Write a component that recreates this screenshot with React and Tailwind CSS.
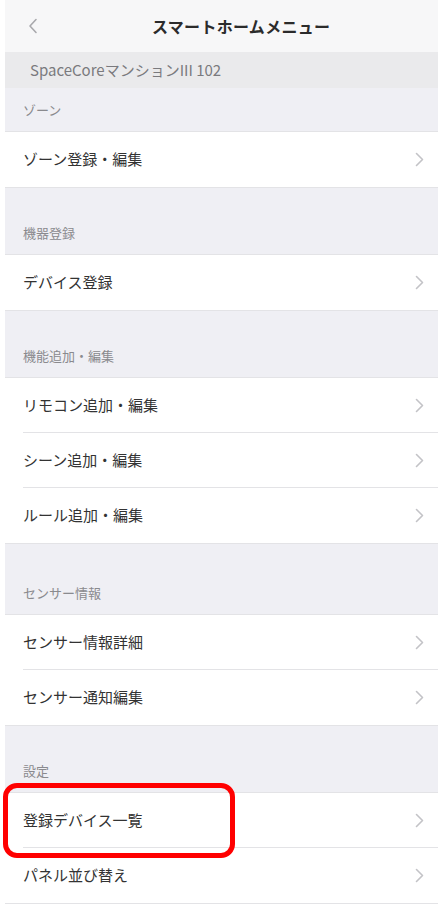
import React from 'react';

const font = { fontFamily: '"Noto Sans CJK JP", "Noto Sans", sans-serif' };

function Chevron() {
  return (
    <svg width="9" height="15" viewBox="0 0 9 15" className="shrink-0">
      <path d="M1.5 1.5 L7.5 7.5 L1.5 13.5" fill="none" stroke="#c3c3c7" strokeWidth="1.6" strokeLinecap="round" strokeLinejoin="round" />
    </svg>
  );
}

function Row({ label, last, highlight }) {
  return (
    <div className="relative h-[55px] bg-white flex items-center pl-[18px] pr-[14px]">
      <span className="flex-1 text-[15px] text-[#333]">{label}</span>
      <Chevron />
      {!last && <div className="absolute left-[18px] right-0 bottom-0 h-px bg-[#e3e3e6]" />}
      {highlight && (
        <div className="absolute z-10 -left-[2px] -top-[10px] -bottom-[10px] w-[232px] border-[5px] border-[#ff0000] rounded-[14px]" />
      )}
    </div>
  );
}

function Section({ title, height, rows }) {
  return (
    <>
      <div className={`${height} bg-[#efeff4] flex items-end pl-[18px] pb-[12px] text-[13px] text-[#8a8a8e]`}>
        {title}
      </div>
      <div className="border-y border-[#e3e3e6]">
        {rows.map((r, i) => (
          <Row key={r.label} label={r.label} highlight={r.highlight} last={i === rows.length - 1} />
        ))}
      </div>
    </>
  );
}

export default function App() {
  return (
    <div className="bg-white min-h-[904px] pl-[5px] pr-[3px]" style={font}>
      {/* Nav bar */}
      <div className="h-[52px] bg-[#f7f7f8] flex items-center relative">
        <svg width="10" height="16" viewBox="0 0 10 16" className="absolute left-[23px]">
          <path d="M8 1.5 L2 8 L8 14.5" fill="none" stroke="#a9a9ad" strokeWidth="1.6" strokeLinecap="round" strokeLinejoin="round" />
        </svg>
        <div className="w-full pl-[147px] text-[16px] font-bold text-[#2b2b2b] tracking-[0.3px]">スマートホームメニュー</div>
      </div>

      {/* Property name */}
      <div className="h-[36px] bg-[#eaeaec] flex items-center pl-[25px] text-[15px] text-[#7a7a7e]">
        SpaceCoreマンションIII 102
      </div>

      <div className="h-[43px] bg-[#efeff4] flex items-center pl-[18px] text-[13px] text-[#8a8a8e]">ゾーン</div>
      <div className="border-y border-[#e3e3e6]">
        <Row label="ゾーン登録・編集" last />
      </div>

      <Section title="機器登録" height="h-[66px]" rows={[{ label: 'デバイス登録' }]} />
      <Section
        title="機能追加・編集"
        height="h-[66px]"
        rows={[{ label: 'リモコン追加・編集' }, { label: 'シーン追加・編集' }, { label: 'ルール追加・編集' }]}
      />
      <Section
        title="センサー情報"
        height="h-[70px]"
        rows={[{ label: 'センサー情報詳細' }, { label: 'センサー通知編集' }]}
      />
      <Section
        title="設定"
        height="h-[66px]"
        rows={[{ label: '登録デバイス一覧', highlight: true }, { label: 'パネル並び替え' }]}
      />
    </div>
  );
}
